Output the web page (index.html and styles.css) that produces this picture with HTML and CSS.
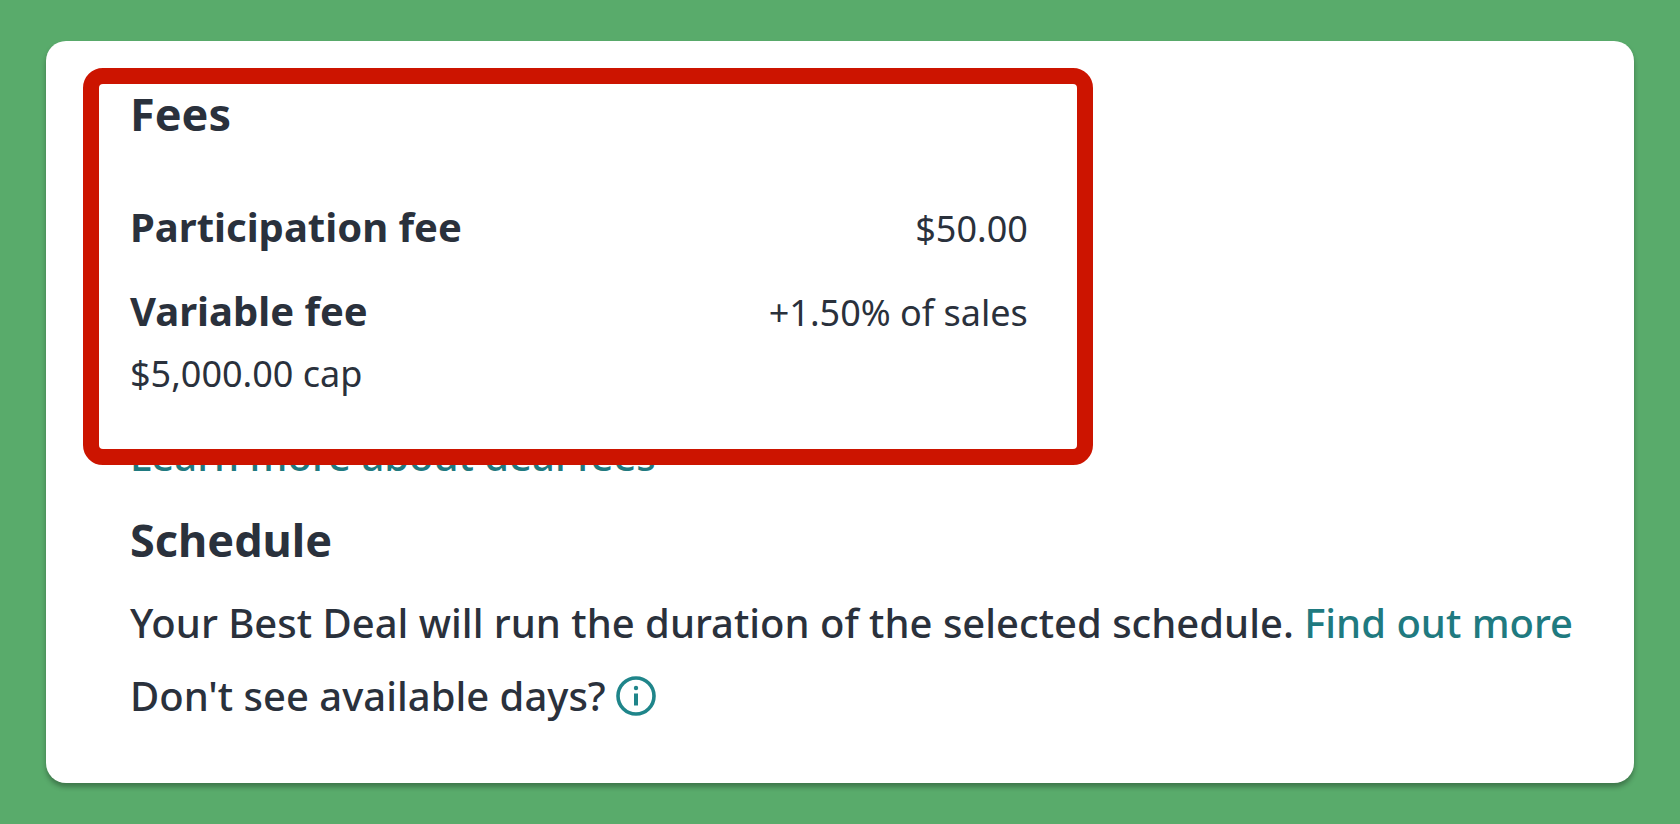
FILE: index.html
```html
<!DOCTYPE html>
<html lang="en">
<head>
  <meta charset="UTF-8">
  <meta name="viewport" content="width=device-width, initial-scale=1.0">
  <title>Best Deal fees</title>
  <link rel="stylesheet" href="styles.css">
</head>
<body>
  <main class="card">
    <!-- Fees -->
    <section class="fees">
      <h2>Fees</h2>
      <dl class="fee-list">
        <div class="fee-row">
          <dt>Participation fee</dt>
          <dd>$50.00</dd>
        </div>
        <div class="fee-row">
          <dt>Variable fee</dt>
          <dd>+1.50% of sales</dd>
        </div>
      </dl>
      <p class="cap">$5,000.00 cap</p>
    </section>
    <a class="learn-more" href="#fees">Learn more about deal fees</a>

    <!-- Schedule -->
    <section class="schedule">
      <h2>Schedule</h2>
      <p>Your Best Deal will run the duration of the selected schedule. <a href="#schedule">Find out more</a></p>
      <div class="help">
        <span>Don't see available days?</span>
        <button class="info" type="button" aria-label="More information">
          <svg viewBox="0 0 40 40" width="40" height="40">
            <circle cx="20" cy="20" r="18" fill="none" stroke="currentColor" stroke-width="3.6"/>
            <circle cx="20" cy="12" r="2.2" fill="currentColor"/>
            <path d="M20 17.5v12" fill="none" stroke="currentColor" stroke-width="4"/>
          </svg>
        </button>
      </div>
    </section>
  </main>
</body>
</html>
```
FILE: styles.css
```css
* {
  box-sizing: border-box;
}

body {
  font-family: "Noto Sans", sans-serif;
  font-size: 40px;
  font-weight: 500;
  line-height: 48px;
  margin: 0;
  padding: 41px 46px;
  background-color: #59ab6b;
  color: #2a313c;
}

h2,
p,
dl,
dd {
  margin: 0;
}

h2 {
  font-size: 45px;
  line-height: 56px;
}

a {
  color: #1f7a80;
  text-decoration: none;
}

a:hover {
  text-decoration: underline;
}

.card {
  padding: 27px 37px 63px;
  background-color: white;
  border-radius: 20px;
  box-shadow: 0 4px 5px rgba(0, 0, 0, 0.3);
}

/* Fees */
.fees {
  position: relative;
  z-index: 1;
  width: 66.7%;
  padding: 2px 49px 51px 31px;
  background-color: white;
  border: 16px solid #cc1400;
  border-radius: 20px;
}

.fee-list {
  display: flex;
  flex-direction: column;
  gap: 34px;
  margin: 61px 0 13px;
}

.fee-row {
  display: flex;
  justify-content: space-between;
  align-items: baseline;
}

.fee-row dt {
  font-weight: bold;
}

.fee-row dd,
.cap {
  font-size: 36px;
  font-weight: 400;
}

/* The link slides under the frame of the fees box */
.learn-more {
  display: block;
  margin: -33px 47px 0;
}

/* Schedule */
.schedule {
  padding-top: 32px;
  padding-left: 47px;
}

.schedule p {
  margin: 31px 0 25px;
}

.help {
  display: flex;
  align-items: center;
  gap: 10px;
}

.info {
  display: flex;
  padding: 0;
  border: none;
  background: none;
  color: #1f858a;
  cursor: pointer;
}
```
